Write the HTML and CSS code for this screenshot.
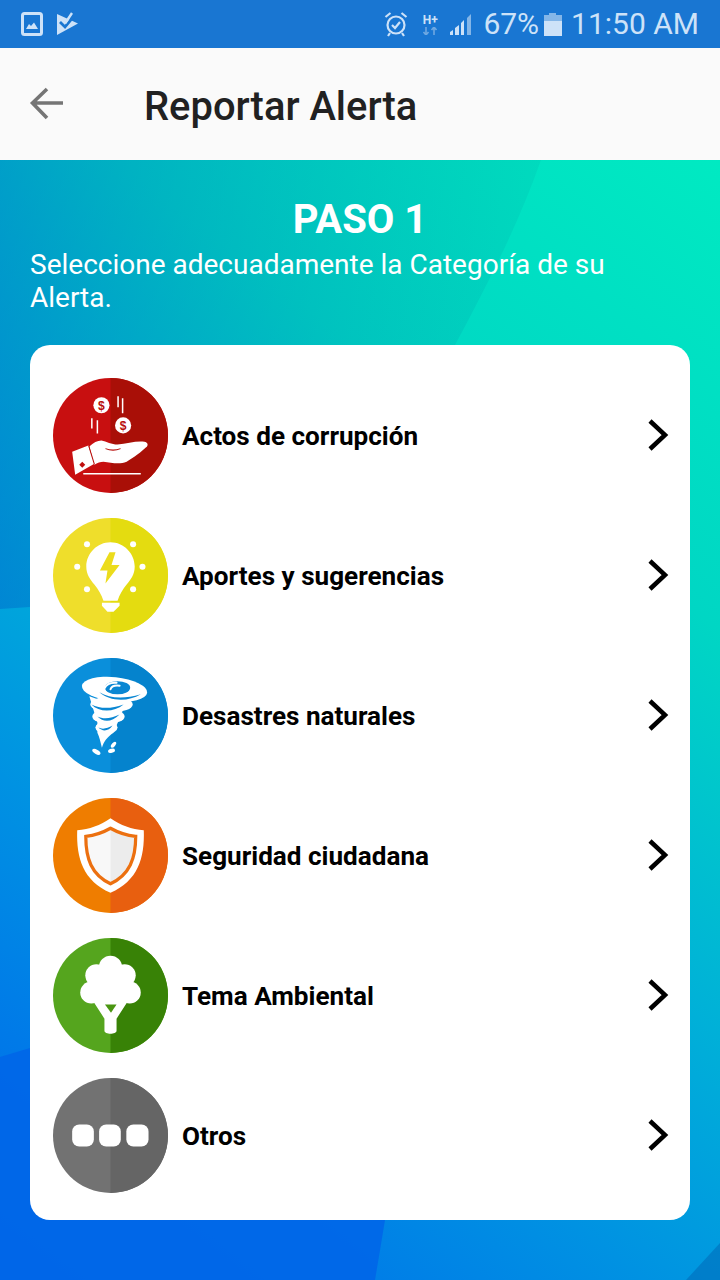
FILE: index.html
```html
<!DOCTYPE html>
<html lang="es">
<head>
<meta charset="utf-8">
<title>Reportar Alerta</title>
<link rel="stylesheet" href="styles.css">
</head>
<body>
<div class="phone">
  <header class="status">
    <div class="status-left">
      <svg class="st-icon" width="22" height="24" viewBox="0 0 22 24"><rect class="st-line" x="1.500" y="1.500" width="19" height="21" rx="2"/><path class="st-fill" d="M5 17l3-5 2 2 3-3.500 4 6.500z"/></svg>
      <svg class="st-icon" width="22" height="24" viewBox="0 0 22 24"><path class="st-fill" d="M0 2L21 11.500 0 23z"/><path class="st-cut" d="M3 10l5 5 9-11"/><path class="st-tick" d="M7 8l2 2 6-9"/></svg>
    </div>
    <div class="status-right">
      <svg class="st-icon" width="24" height="26" viewBox="0 0 24 26"><circle class="st-line-t" cx="12" cy="14" r="8.500"/><path class="st-line-t" d="M8 14l3 3 5-6M1.500 6l5-4M22.500 6l-5-4M6 22l-2 3M18 22l2 3"/></svg>
      <div class="net">
        <span class="net-h">H+</span>
        <svg width="16" height="8" viewBox="0 0 16 8"><path class="st-dim" d="M4 0v8M1.500 5l2.500 3 2.500-3M12 8V0M9.500 3L12 0l2.500 3"/></svg>
      </div>
      <svg class="st-signal" width="24" height="24" viewBox="0 0 24 24"><path class="st-fill" d="M1 23v-3l3-2v5zM6 23v-7l4-3v10zM12 23V11l3-3v15z"/><path class="st-fill-dim" d="M18 23V6l4-4v21z"/></svg>
      <span class="pct">67%</span>
      <svg class="st-batt" width="18" height="23" viewBox="0 0 18 23"><path class="st-fill-dim" d="M5 0h7v2h6v6H0V2h5z"/><rect class="st-fill" y="8" width="18" height="15"/></svg>
      <span class="clock">11:50 AM</span>
    </div>
  </header>

  <nav class="appbar">
    <svg class="back" width="36" height="36" viewBox="0 0 36 36"><path d="M34 17H3M18 3L3.500 17 18 32"/></svg>
    <h1 class="appbar-title">Reportar Alerta</h1>
  </nav>

  <main class="screen">
    <svg class="backdrop" width="720" height="1120" viewBox="0 0 720 1120">
      <defs>
        <linearGradient id="shadeGrad" gradientUnits="userSpaceOnUse" x1="0" y1="0" x2="540" y2="0">
          <stop class="shade-from" offset="0"/>
          <stop class="shade-to" offset="1"/>
        </linearGradient>
      </defs>
      <path class="shade" d="M0 0H541C520 60 490 120 455 185L30 447 0 449z"/>
      <path class="shade-2" d="M0 897L30 888C150 860 290 960 385 1060L375 1120H0z"/>
      <path class="shade-3" d="M720 1083L686 1120H720z"/>
    </svg>
    <section class="intro">
      <h2 class="step">PASO 1</h2>
      <p class="lead">Seleccione adecuadamente la Categoría de su Alerta.</p>
    </section>
    <ul class="card">
      <li class="row">
        <svg class="cat" viewBox="0 0 114 114"><circle class="red-a" cx="57" cy="57" r="57"/><path class="red-b" d="M57 0a57 57 0 0 1 0 114z"/>
          <path class="w" d="M19 73l16-6 6 18-19 11zM36 68C40 64 44 62 48 62C53 63 58 66 64 66C72 65 80 63 87 63C93 62 96 66 92 69C88 73 80 79 73 83C66 86 58 84 50 83C47 83 44 84 41 86z"/>
          <path class="red-line" d="M35.500 67.500L41 85.500M52 70C57 72 62 72 67 70"/>
          <path class="red-fill" d="M26 86l3-3 3 3-3 3z"/>
          <path class="w-line" d="M30 95H87M64.500 18v11M69 20v15M38.500 40v10M44 42v13"/>
          <circle class="w" cx="48" cy="27" r="8"/><circle class="w" cx="69.500" cy="47" r="8"/>
          <text class="coin" x="48" y="31.500">$</text><text class="coin" x="69.500" y="51.500">$</text></svg>
        <span class="label">Actos de corrupción</span>
        <svg class="chev" width="22" height="34" viewBox="0 0 22 34"><path d="M3 3l15 14L3 31"/></svg>
      </li>
      <li class="row">
        <svg class="cat" viewBox="0 0 114 114"><circle class="yel-a" cx="57" cy="57" r="57"/><path class="yel-b" d="M57 0a57 57 0 0 1 0 114z"/>
          <path class="w" d="M57 24C70 24 81 35 81 48C81 56 77 61 73 66C69 71 66 76 64 82H50C48 76 45 71 41 66C37 61 33 56 33 48C33 35 44 24 57 24z"/>
          <path class="w" d="M48.500 84H66V87L60 93H54L48.500 87z"/>
          <path class="yel-bolt" d="M56 34L46.500 52H54L52 65L66 46.500H58L62 34z"/>
          <circle class="w" cx="33.700" cy="26" r="3"/><circle class="w" cx="79.400" cy="26" r="3"/><circle class="w" cx="24" cy="48.300" r="3"/><circle class="w" cx="88.700" cy="48.300" r="3"/><circle class="w" cx="33.700" cy="70.700" r="3"/><circle class="w" cx="79.400" cy="70.700" r="3"/></svg>
        <span class="label">Aportes y sugerencias</span>
        <svg class="chev" width="22" height="34" viewBox="0 0 22 34"><path d="M3 3l15 14L3 31"/></svg>
      </li>
      <li class="row">
        <svg class="cat" viewBox="0 0 114 114"><circle class="blu-a" cx="57" cy="57" r="57"/><path class="blu-b" d="M57 0a57 57 0 0 1 0 114z"/>
          <ellipse class="w" cx="61" cy="31" rx="32.500" ry="12" transform="rotate(6 61 31)"/>
          <ellipse class="w" cx="58" cy="46" rx="21" ry="8"/>
          <ellipse class="w" cx="55" cy="58" rx="16" ry="7"/>
          <ellipse class="w" cx="53" cy="69" rx="11" ry="6"/>
          <path class="w" d="M36 38L44 64 44 74C46 78 47 83 48.500 89C50 83 54 78 60 74L70 50z"/>
          <ellipse class="blu-eye" cx="64" cy="29.500" rx="12.500" ry="6.500"/>
          <path class="w-arc" d="M51 30C53 26 57 24 63 24.500M57 31C58 28 62 27 66 27.500"/>
          <path class="blu-fill" d="M46 34C56 40 70 41 87 36C74 44 56 43 46 34zM38 46C48 51 58 50 70 46C60 54 46 54 38 46zM44 58C50 61 58 60 66 56C58 64 50 64 44 58zM45 69C49 71 54 70 59 67C55 73 49 73 45 69z"/>
          <ellipse class="w" cx="43" cy="93" rx="4.500" ry="2.200" transform="rotate(30 43 93)"/><ellipse class="w" cx="58" cy="92" rx="3.500" ry="2" transform="rotate(-15 58 92)"/><ellipse class="w" cx="60" cy="86" rx="3.500" ry="1.800" transform="rotate(-50 60 86)"/></svg>
        <span class="label">Desastres naturales</span>
        <svg class="chev" width="22" height="34" viewBox="0 0 22 34"><path d="M3 3l15 14L3 31"/></svg>
      </li>
      <li class="row">
        <svg class="cat" viewBox="0 0 114 114"><circle class="org-a" cx="57" cy="57" r="57"/><path class="org-b" d="M57 0a57 57 0 0 1 0 114z"/>
          <path class="w" d="M57 20C47 27 36 31 24 32C23 60 30 82 57 94C84 82 91 60 90 32C78 31 67 27 57 20z"/>
          <path class="sh-l" d="M57 30C50 34 42 37 32.500 38C32.500 60 38 76 57 85z"/>
          <path class="sh-r" d="M57 30C64 34 72 37 82 38C82 60 76 76 57 85z"/>
          <path class="org-line" d="M57 30C50 34 42 37 32.500 38C32.500 60 38 76 57 85C76 76 82 60 82 38C72 37 64 34 57 30z"/></svg>
        <span class="label">Seguridad ciudadana</span>
        <svg class="chev" width="22" height="34" viewBox="0 0 22 34"><path d="M3 3l15 14L3 31"/></svg>
      </li>
      <li class="row">
        <svg class="cat" viewBox="0 0 114 114"><circle class="grn-a" cx="57" cy="57" r="57"/><path class="grn-b" d="M57 0a57 57 0 0 1 0 114z"/>
          <circle class="w" cx="57" cy="29" r="11.500"/><circle class="w" cx="43" cy="37" r="11"/><circle class="w" cx="71" cy="37" r="11"/><circle class="w" cx="38" cy="54" r="11"/><circle class="w" cx="76" cy="54" r="11"/><circle class="w" cx="57" cy="46" r="20"/>
          <path class="w" d="M40 60H74V63L63 80V92C63 96 51 96 51 92V80L40 63z"/>
          <path class="grn-tri" d="M51.500 66H63L57.500 74z"/></svg>
        <span class="label">Tema Ambiental</span>
        <svg class="chev" width="22" height="34" viewBox="0 0 22 34"><path d="M3 3l15 14L3 31"/></svg>
      </li>
      <li class="row">
        <svg class="cat" viewBox="0 0 114 114"><circle class="gry-a" cx="57" cy="57" r="57"/><path class="gry-b" d="M57 0a57 57 0 0 1 0 114z"/>
          <rect class="w" x="19" y="46" width="21.500" height="22" rx="7"/><rect class="w" x="45.700" y="46" width="21.500" height="22" rx="7"/><rect class="w" x="72.700" y="46" width="22" height="22" rx="7"/></svg>
        <span class="label">Otros</span>
        <svg class="chev" width="22" height="34" viewBox="0 0 22 34"><path d="M3 3l15 14L3 31"/></svg>
      </li>
    </ul>
  </main>
</div>
</body>
</html>
```
FILE: styles.css
```css
* { box-sizing: border-box; }
html, body { margin: 0; padding: 0; }
body { font-family: Roboto, "Liberation Sans", sans-serif; background: #0066ea; }
.phone { width: 720px; height: 1280px; display: flex; flex-direction: column; overflow: hidden; }

.status { height: 48px; flex: none; background: #1976d2; display: flex; justify-content: space-between; align-items: center; padding: 0 21px; color: #cde2f8; }
.status-left { display: flex; align-items: center; gap: 14px; }
.status-right { display: flex; align-items: center; }
.st-icon { display: block; }
.st-line { fill: none; stroke: #cde2f8; stroke-width: 3; }
.st-line-t { fill: none; stroke: #cde2f8; stroke-width: 2.200; }
.st-fill { fill: #cde2f8; }
.st-fill-dim { fill: #84b6e8; }
.st-dim { fill: none; stroke: #6ea8e2; stroke-width: 1.600; }
.st-cut { fill: none; stroke: #1976d2; stroke-width: 2.800; }
.st-tick { fill: none; stroke: #cde2f8; stroke-width: 2.400; }
.net { display: flex; flex-direction: column; align-items: center; margin-left: 13px; width: 18px; }
.net-h { font-size: 12px; font-weight: 700; line-height: 13px; color: #cde2f8; }
.st-signal { margin-left: 10px; }
.pct { font-size: 30px; margin-left: 10px; line-height: 36px; }
.st-batt { margin-left: 5px; }
.clock { font-size: 30px; margin-left: 9px; line-height: 36px; }

.appbar { height: 112px; flex: none; background: #fafafa; display: flex; align-items: center; padding-left: 29px; }
.back { flex: none; }
.back path { fill: none; stroke: #757575; stroke-width: 3.600; }
.appbar-title { margin: 4px 0 0 79px; font-size: 39.900px; font-weight: 500; color: #212121; }

.screen { position: relative; flex: 1; padding: 0 30px; background: linear-gradient(218deg, #00eac2 0%, #00d6c4 28%, #00b0d8 52%, #0092e2 70%, #007ae8 85%, #0068ea 100%); }
.backdrop { position: absolute; left: 0; top: 0; }
.shade { fill: url(#shadeGrad); }
.shade-from { stop-color: #0060c8; stop-opacity: .42; }
.shade-to { stop-color: #00a0a0; stop-opacity: .14; }
.shade-2 { fill: #0066e8; fill-opacity: .9; }
.shade-3 { fill: #0060b0; fill-opacity: .45; }

.intro { position: relative; padding-top: 37px; color: #fff; }
.step { margin: 0; font-size: 40px; font-weight: 700; line-height: 46px; text-align: center; }
.lead { margin: 0; font-size: 28px; line-height: 33px; padding-top: 5px; }

.card { position: relative; list-style: none; margin: 31px 0 0; padding: 20px 21px 15px 23px; background: #fff; border-radius: 20px; }
.row { height: 140px; display: flex; align-items: center; }
.cat { width: 115px; height: 115px; flex: none; display: block; }
.label { flex: 1; margin: 2px 0 0 14px; font-size: 26.100px; font-weight: 700; color: #000; }
.chev { flex: none; }
.chev path { fill: none; stroke: #000; stroke-width: 4.500; }

.w { fill: #fff; }
.w-line { fill: none; stroke: #fff; stroke-width: 1.500; }
.w-arc { fill: none; stroke: #fff; stroke-width: 2; stroke-linecap: round; }
.coin { font-family: "Liberation Sans", sans-serif; font-size: 12px; font-weight: 700; text-anchor: middle; fill: #b80e0c; }
.red-a { fill: #c80f10; } .red-b { fill: #a90f07; }
.red-line { fill: none; stroke: #b80e0c; stroke-width: 1; }
.red-fill { fill: #c00f0e; }
.yel-a { fill: #efde2b; } .yel-b { fill: #e4dc10; }
.yel-bolt { fill: #ecdc1c; }
.blu-a { fill: #0a8fdb; } .blu-b { fill: #0583cd; }
.blu-fill { fill: #0a87d3; }
.blu-eye { fill: #0a87d3; }
.org-a { fill: #ef7d00; } .org-b { fill: #e85f0f; }
.sh-l { fill: #f8f8f8; } .sh-r { fill: #ececec; }
.org-line { fill: none; stroke: #ec7010; stroke-width: 3.200; }
.grn-a { fill: #55a51e; } .grn-b { fill: #388206; }
.grn-tri { fill: #4a9612; }
.gry-a { fill: #727272; } .gry-b { fill: #656565; }
```
